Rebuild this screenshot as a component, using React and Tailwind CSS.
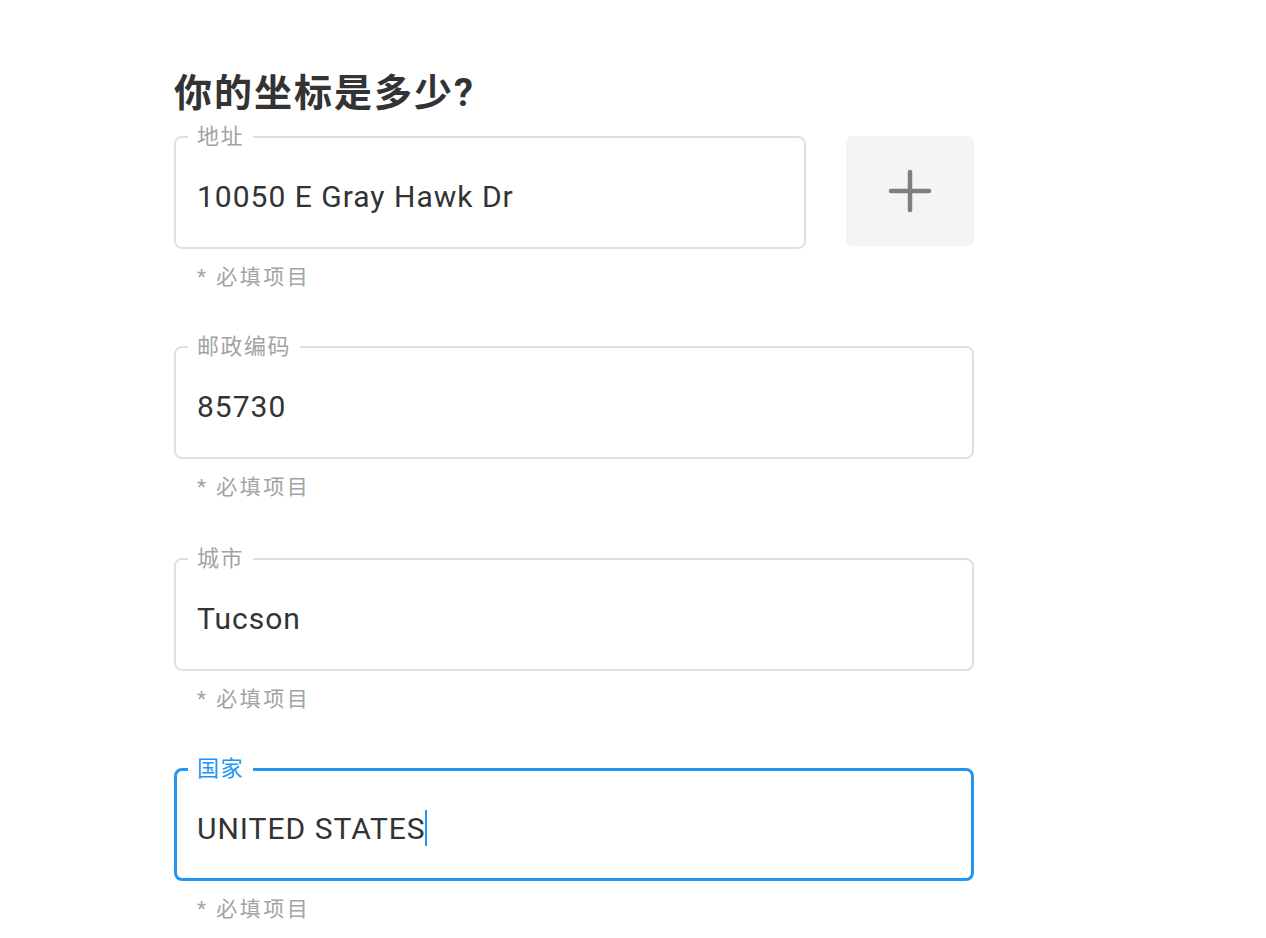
import React from "react";

const FONT = "font-['Roboto','Noto_Sans_CJK_SC',sans-serif]";

function Field({ label, value, focused, className = "" }) {
  return (
    <div className={className}>
      <fieldset
        className={
          "h-[124px] rounded-lg pl-[12px] pr-4 flex flex-col " +
          (focused ? "border-[3px] border-[#2196f3]" : "border-2 border-[#e0e0e0]")
        }
      >
        <legend
          className={
            "px-[9px] text-[22px] leading-6 tracking-[1.5px] " +
            (focused ? "text-[#2196f3] -ml-[1px]" : "text-[#a3a3a3]")
          }
        >
          {label}
        </legend>
        <div
          className={
            "flex-1 flex items-center pb-[3px] text-[30px] tracking-[1px] text-[#333] " +
            (focused ? "pl-[8px]" : "pl-[9px]")
          }
        >
          <span>{value}</span>
          {focused && <span className="-ml-[1px] w-[2px] h-[36px] bg-[#2196f3]" />}
        </div>
      </fieldset>
      <p className="mt-[16px] pl-[23px] text-[21px] leading-6 text-[#a3a3a3] tracking-[2.5px]">* 必填项目</p>
    </div>
  );
}

export default function App() {
  return (
    <div className={"min-h-screen bg-white " + FONT}>
      <div className="w-[800px] ml-[174px] pt-[70px]">
        <h1 className="text-[38px] leading-[46px] font-bold text-[#333] tracking-[2px]">你的坐标是多少?</h1>
        <div className="mt-[9px] flex gap-[40px]">
          <Field label="地址" value="10050 E Gray Hawk Dr" className="w-[632px]" />
          <button className="mt-[11px] w-[128px] h-[110px] rounded-md bg-[#f4f4f4] flex items-center justify-center">
            <svg width="44" height="44" viewBox="0 0 44 44" fill="none" stroke="#7f7f7f" strokeWidth="4.5" strokeLinecap="round">
              <path d="M22 3v38M3 22h38" />
            </svg>
          </button>
        </div>
        <Field label="邮政编码" value="85730" className="mt-[46px] w-[800px]" />
        <Field label="城市" value="Tucson" className="mt-[48px] w-[800px]" />
        <Field label="国家" value="UNITED STATES" focused className="mt-[46px] w-[800px]" />
      </div>
    </div>
  );
}
